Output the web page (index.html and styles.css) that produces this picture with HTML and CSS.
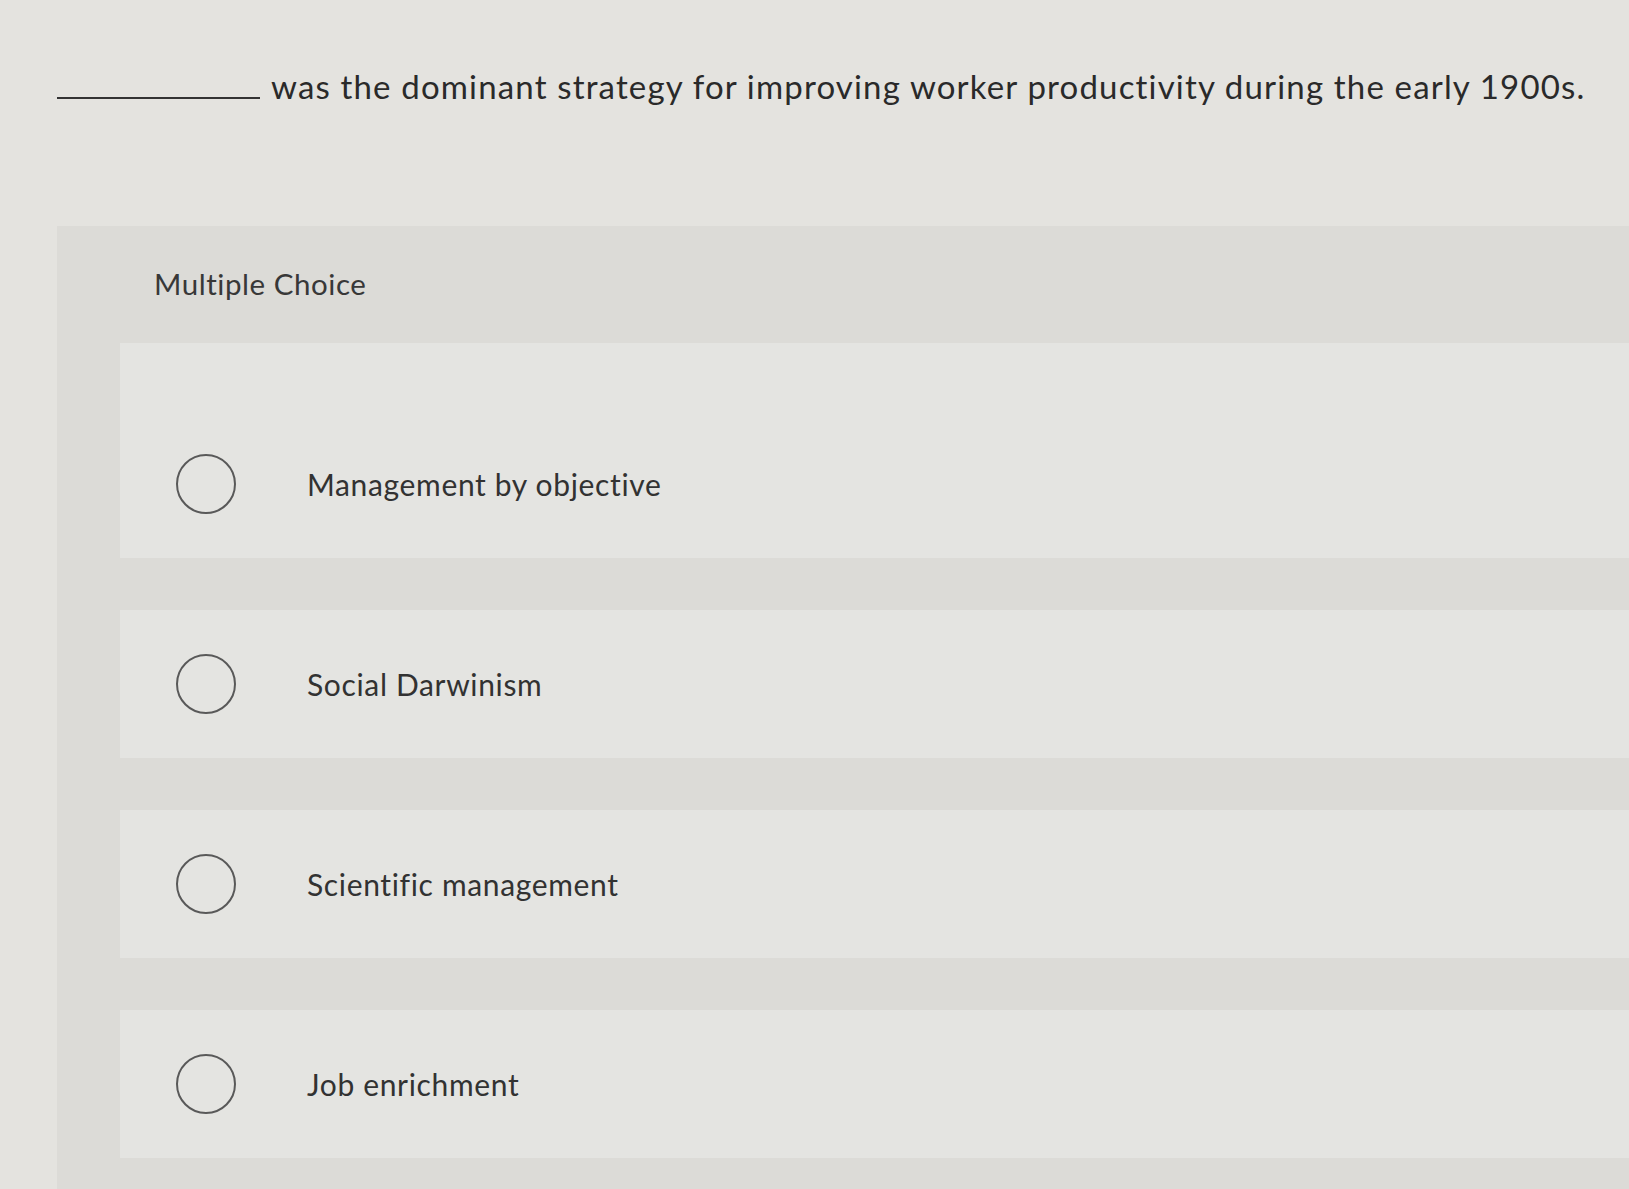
FILE: index.html
```html
<!DOCTYPE html>
<html lang="en">
<head>
<meta charset="utf-8">
<title>Multiple Choice</title>
<link rel="stylesheet" href="styles.css">
</head>
<body>
  <div class="question">
    <span class="blank"></span>
    <span class="prompt">was the dominant strategy for improving worker productivity during the early 1900s.</span>
  </div>
  <section class="panel">
    <div class="panel-title">Multiple Choice</div>
    <ul class="choices">
      <li class="option"><span class="radio"></span><span class="label">Management by objective</span></li>
      <li class="option"><span class="radio"></span><span class="label">Social Darwinism</span></li>
      <li class="option"><span class="radio"></span><span class="label">Scientific management</span></li>
      <li class="option"><span class="radio"></span><span class="label">Job enrichment</span></li>
    </ul>
  </section>
</body>
</html>
```
FILE: styles.css
```css
html, body {
  margin: 0;
  padding: 0;
}
body {
  background: #e4e3df;
  font-family: "Lato", "Liberation Sans", sans-serif;
  color: #2f2f2f;
  height: 1189px;
  overflow: hidden;
}
.question {
  display: flex;
  align-items: baseline;
  padding: 66px 0 0 57px;
  height: 164px;
  box-sizing: border-box;
}
.blank {
  display: inline-block;
  width: 203px;
  border-bottom: 2px solid #333;
  margin-right: 11px;
}
.prompt {
  font-size: 33px;
  letter-spacing: 1.16px;
  color: #2a2a2a;
}
.panel {
  margin: 62px 0 0 57px;
  background: #dcdbd7;
  padding-top: 43px;
  padding-bottom: 60px;
}
.panel-title {
  padding-left: 97px;
  font-size: 29.5px;
  letter-spacing: 0.55px;
  line-height: 30px;
  color: #383838;
}
.choices {
  list-style: none;
  margin: 44px 0 0 63px;
  padding: 0;
  display: flex;
  flex-direction: column;
  gap: 52px;
}
.option {
  display: flex;
  align-items: center;
  height: 148px;
  background: #e4e4e1;
  padding-left: 56px;
}
.option:first-child {
  height: 215px;
  padding-top: 67px;
  box-sizing: border-box;
}
.radio {
  width: 56px;
  height: 56px;
  border: 2px solid #595959;
  border-radius: 50%;
  flex: none;
}
.label {
  margin-left: 71px;
  font-size: 30px;
  letter-spacing: 0.65px;
  color: #323232;
}
```
